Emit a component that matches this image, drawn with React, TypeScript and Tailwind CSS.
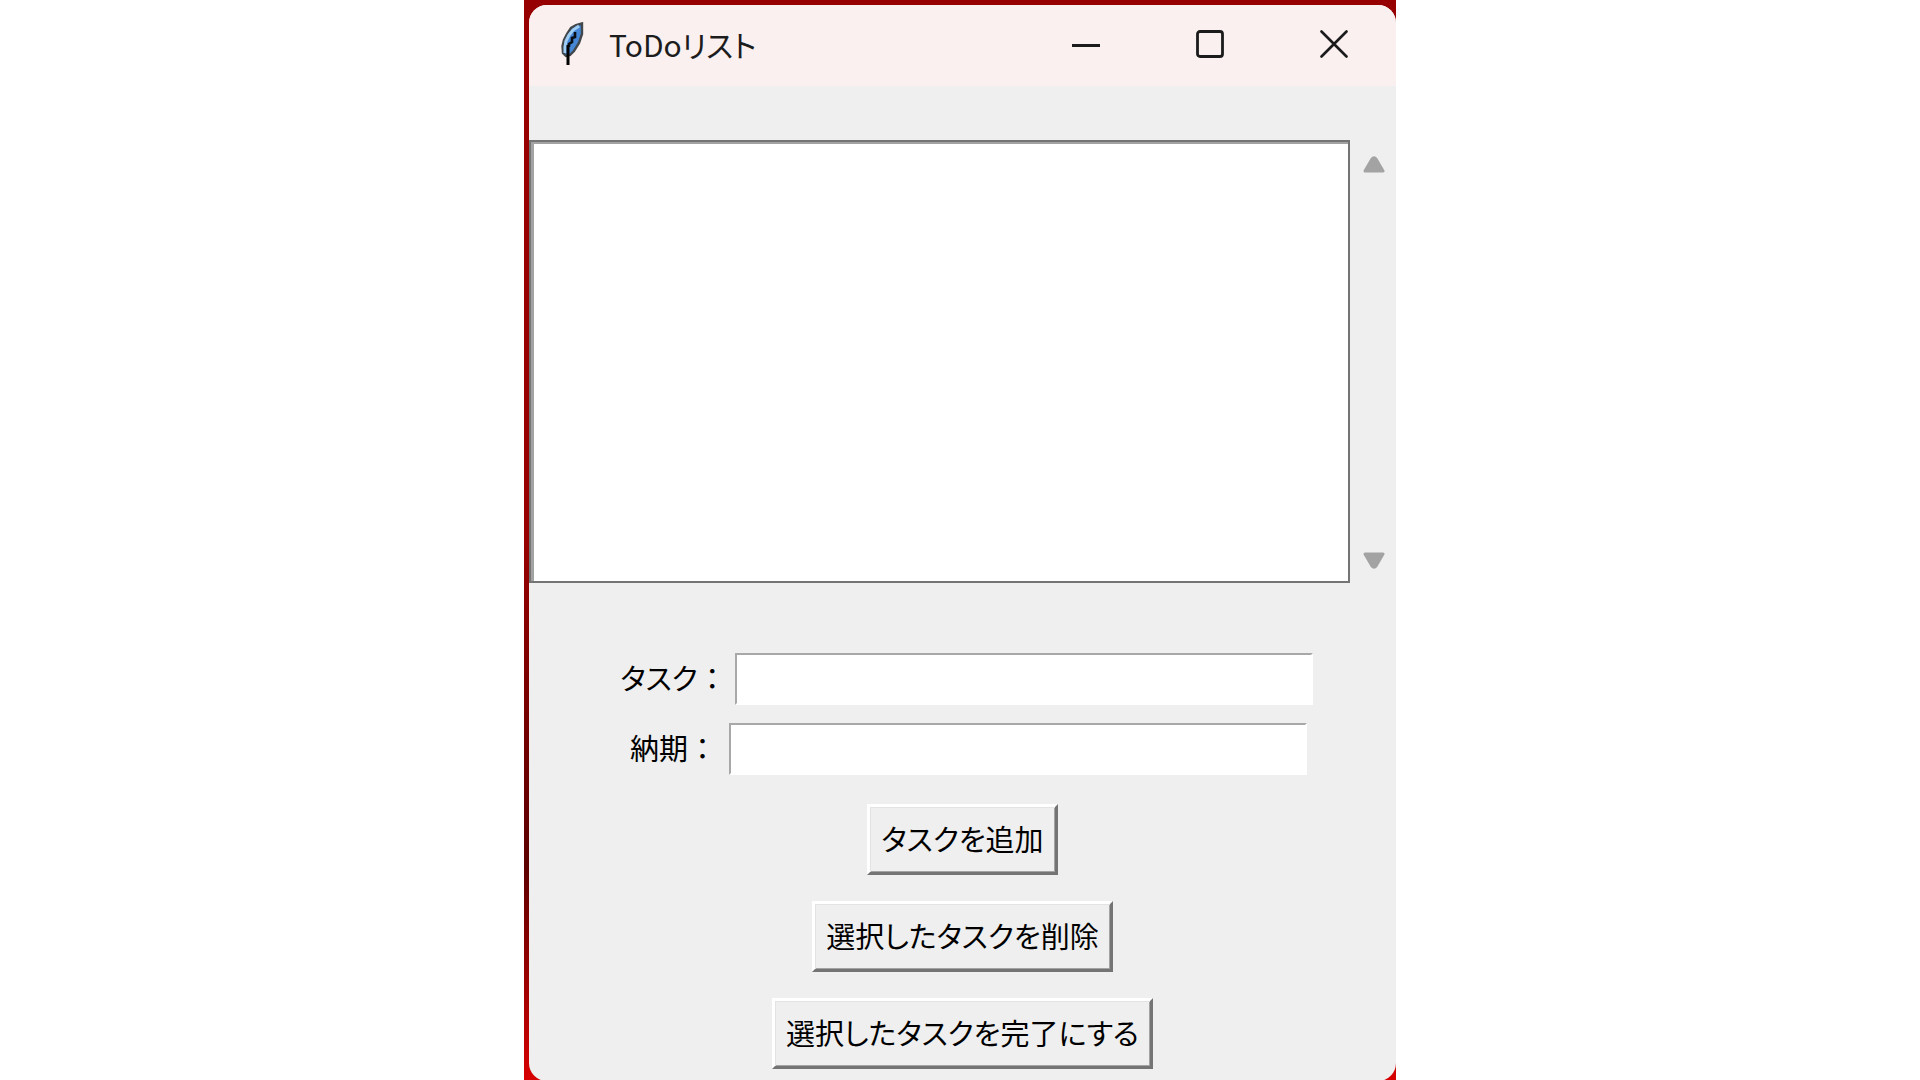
import React from "react";

const fields = [
  { id: "task", label: "タスク" },
  { id: "deadline", label: "納期" },
];

const actions = [
  "タスクを追加",
  "選択したタスクを削除",
  "選択したタスクを完了にする",
];

const FeatherIcon = () => (
  <svg viewBox="0 0 24 44" className="w-6 h-11" aria-hidden="true">
    <path
      d="M21 1.5 L15 3 L10 6 L6 12 L3 18 L1.5 24 L2 31 L5 34 L9 33 L13 29 L18 21 L21 12 Z"
      fill="#4586d6"
      stroke="#42474c"
      strokeWidth="2.4"
    />
    <path
      d="M18 4 L12 8 L8 13 L5 19 L4 25 L4 31"
      fill="none"
      stroke="#9fcdf4"
      strokeWidth="3"
    />
    <path
      d="M14 10 V15 L11 16 V20 L8 22 V25"
      fill="none"
      stroke="#0a0d12"
      strokeWidth="2.6"
    />
    <path d="M7 23 V43" fill="none" stroke="#000" strokeWidth="3" />
  </svg>
);

const TitleBar = () => (
  <header className="flex items-center h-[81px] pb-1 pl-8 pr-12 bg-[#f9f0ef]">
    <FeatherIcon />
    <h1 className="grow pl-6 text-[30px] leading-10 text-[#1c1c1c]">
      ToDoリスト
    </h1>
    <div className="flex items-center gap-24">
      <button type="button" aria-label="最小化">
        <svg viewBox="0 0 28 28" className="size-7">
          <path d="M0 15.5 H28" stroke="#1b1b1b" strokeWidth="3" />
        </svg>
      </button>
      <button type="button" aria-label="最大化">
        <svg viewBox="0 0 28 28" className="size-7">
          <rect
            x="1.5"
            y="1.5"
            width="25"
            height="25"
            rx="2.5"
            fill="none"
            stroke="#1b1b1b"
            strokeWidth="2.8"
          />
        </svg>
      </button>
      <button type="button" aria-label="閉じる">
        <svg viewBox="0 0 28 28" className="size-7">
          <path
            d="M1.5 1.5 L26.5 26.5 M26.5 1.5 L1.5 26.5"
            stroke="#1b1b1b"
            strokeWidth="2.6"
            strokeLinecap="round"
          />
        </svg>
      </button>
    </div>
  </header>
);

const TaskList = () => (
  <div className="flex mt-[54px]">
    <ul
      aria-label="タスク一覧"
      className="grow h-[443px] bg-white border-2 border-[#747474] shadow-[inset_3px_2px_0_#a3a3a3]"
    />
    <div className="flex flex-col items-center justify-between w-[46px] pt-4 pb-[14px] pl-[2px]">
      <button type="button" aria-label="上へ">
        <svg viewBox="0 0 22 17" className="w-[22px] h-[17px]">
          <path
            d="M2 15 L9 3 Q11 0.5 13 3 L20 15 Z"
            fill="#a3a3a3"
            stroke="#a3a3a3"
            strokeWidth="3"
            strokeLinejoin="round"
          />
        </svg>
      </button>
      <button type="button" aria-label="下へ">
        <svg viewBox="0 0 22 17" className="w-[22px] h-[17px]">
          <path
            d="M2 2 L9 14 Q11 16.5 13 14 L20 2 Z"
            fill="#a3a3a3"
            stroke="#a3a3a3"
            strokeWidth="3"
            strokeLinejoin="round"
          />
        </svg>
      </button>
    </div>
  </div>
);

const App = () => {
  const [values, setValues] = React.useState<Record<string, string>>({});

  return (
    <div className="min-h-screen bg-white font-['Noto_Sans_CJK_JP',sans-serif] [font-feature-settings:'palt']">
      <main className="flex flex-col w-full max-w-[872px] min-h-screen mx-auto pt-[5px] pl-[5px] bg-linear-to-b from-[#960000] from-50% via-[#5c0000] via-80% to-[#d80000]">
        <div className="grow rounded-[18px] overflow-hidden bg-[#efefef]">
          <TitleBar />
          <TaskList />

          <form
            className="flex flex-col items-center pt-[70px]"
            onSubmit={(e) => e.preventDefault()}
          >
            {fields.map((field) => (
              <div key={field.id} className="flex items-center mb-[18px]">
                <label
                  htmlFor={field.id}
                  className="min-w-[111px] px-2 pb-1 text-center text-[29px] leading-10 text-black"
                >
                  {field.label}
                  <span className="[font-feature-settings:normal]">：</span>
                </label>
                <input
                  id={field.id}
                  type="text"
                  value={values[field.id] ?? ""}
                  onChange={(e) =>
                    setValues({ ...values, [field.id]: e.target.value })
                  }
                  className="w-[578px] h-[52px] px-2 text-[29px] bg-white border-2 border-t-[#a8a8a8] border-l-[#a8a8a8] border-r-white border-b-white outline-none"
                />
              </div>
            ))}

            <div className="flex flex-col items-center gap-[26px] pt-[11px] pb-3">
              {actions.map((action) => (
                <button
                  key={action}
                  type="button"
                  className="h-[71px] px-[11px] pb-1 text-[29px] leading-10 text-black bg-[#efefef] border-3 border-t-white border-l-white border-r-[#747474] border-b-[#747474] shadow-[inset_1px_1px_0_#e3e3e3,inset_-1px_-1px_0_#a3a3a3]"
                >
                  {action}
                </button>
              ))}
            </div>
          </form>
        </div>
      </main>
    </div>
  );
};

export default App;
